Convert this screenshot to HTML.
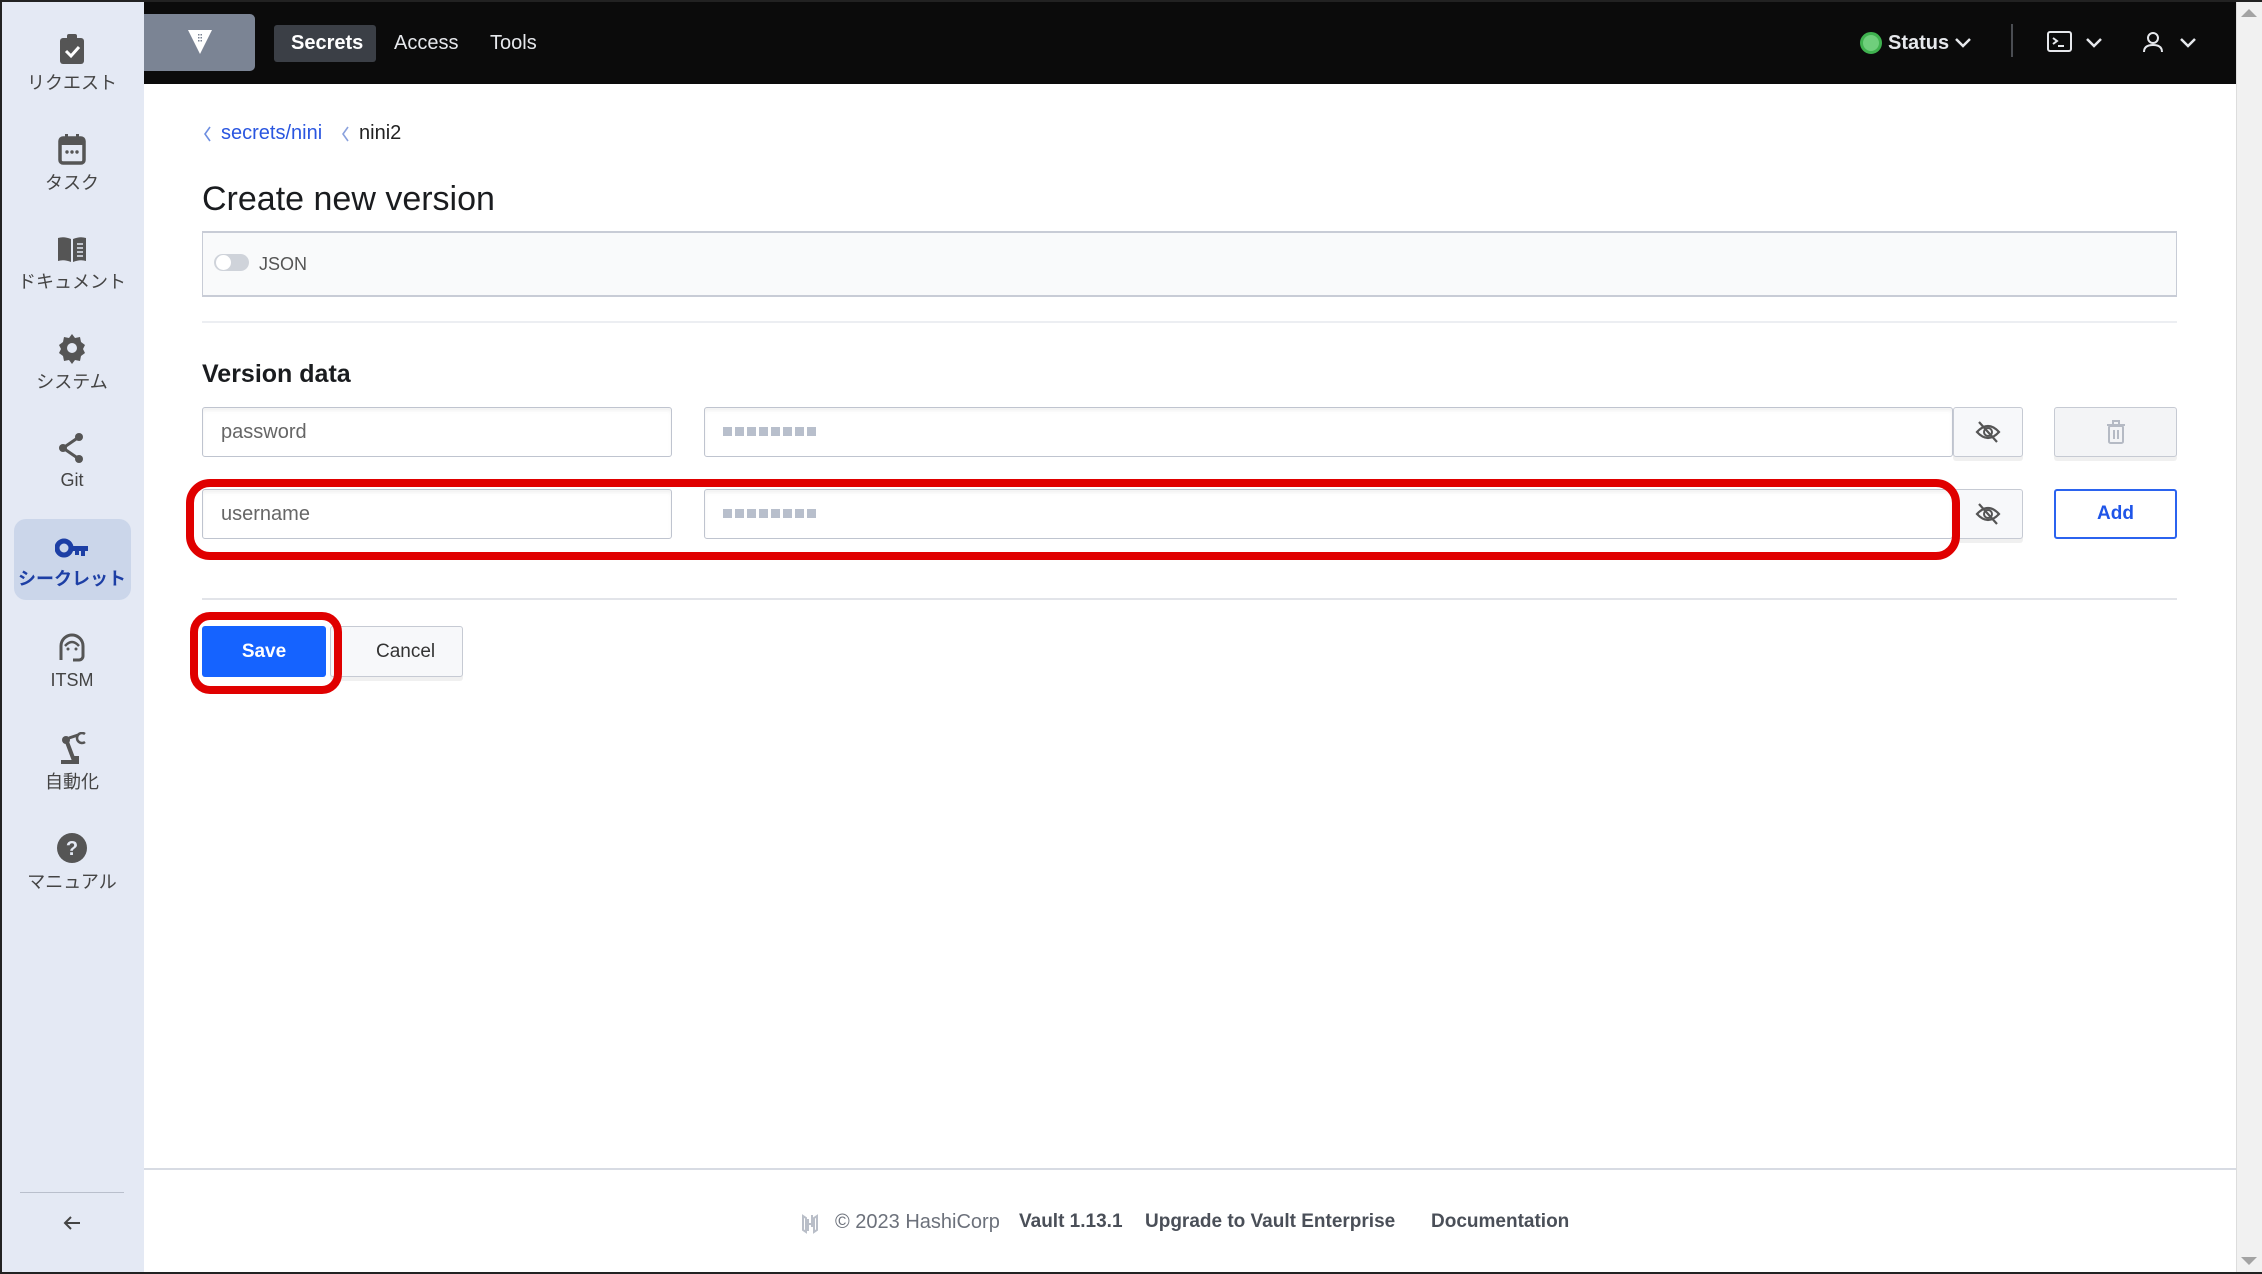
<!DOCTYPE html>
<html><head><meta charset="utf-8"><style>
*{box-sizing:border-box;margin:0;padding:0}
body{width:2262px;height:1274px;position:relative;overflow:hidden;background:#fff;font-family:"Liberation Sans","Noto Sans CJK JP",sans-serif;color:#1f2124}
.a{position:absolute}
.frame{left:0;top:0;width:2262px;height:1274px;border:2px solid #222;border-right:none;pointer-events:none;z-index:50}
.side{left:0;top:0;width:144px;height:1274px;background:#e4e9f4}
.si{position:absolute;left:0;width:144px;text-align:center;color:#444;font-size:18px}
.si svg{display:block;margin:0 auto}
.nav{left:144px;top:0;width:2092px;height:84px;background:#0b0b0b}
.inp{background:#fff;border:1px solid #bfc4cf;border-radius:3px;box-shadow:inset 0 3px 3px rgba(0,0,0,.05)}
.btn{background:#f7f8fa;border:1px solid #c6cad3;border-radius:3px;box-shadow:0 4px 0 rgba(0,0,0,.06)}
.dots{position:absolute;left:18px;top:19px;display:flex;gap:3px}
.dots i{width:9px;height:9px;background:#b8bfcc;display:block}
</style></head><body>
<div class="a side"></div>
<div class="si" style="top:33px"><svg width="30" height="32" viewBox="0 0 30 32"><rect x="3" y="5" width="24" height="26" rx="3" fill="#555"/><rect x="10" y="1" width="10" height="7" rx="2" fill="#555"/><path d="M9 18l5 5 8-9" stroke="#fff" stroke-width="3" fill="none"/></svg><div style="margin-top:4px">リクエスト</div></div>
<div class="si" style="top:133px"><svg width="30" height="32" viewBox="0 0 30 32"><rect x="3" y="5" width="24" height="25" rx="3" fill="none" stroke="#555" stroke-width="3.5"/><rect x="3" y="5" width="24" height="7" fill="#555"/><rect x="8" y="1" width="3" height="6" fill="#555"/><rect x="19" y="1" width="3" height="6" fill="#555"/><circle cx="10" cy="19" r="1.7" fill="#555"/><circle cx="15" cy="19" r="1.7" fill="#555"/><circle cx="20" cy="19" r="1.7" fill="#555"/></svg><div style="margin-top:4px">タスク</div></div>
<div class="si" style="top:234px"><svg width="36" height="30" viewBox="0 0 36 30"><path d="M4 4q6-2 13 1v23q-7-3-13-1z M19 5q7-3 13-1v23q-6-2-13 1z" fill="#555"/><path d="M23 10h6M23 14h6M23 18h6M23 22h6" stroke="#e4e9f4" stroke-width="1.5"/></svg><div style="margin-top:4px">ドキュメント</div></div>
<div class="si" style="top:332px"><svg width="32" height="32" viewBox="0 0 32 32"><path d="M16 2l3 4 5-1 1 5 4 3-2 4 2 4-4 3-1 5-5-1-3 4-3-4-5 1-1-5-4-3 2-4-2-4 4-3 1-5 5 1z" fill="#555"/><circle cx="16" cy="16" r="5" fill="#e4e9f4"/></svg><div style="margin-top:4px">システム</div></div>
<div class="si" style="top:432px"><svg width="30" height="32" viewBox="0 0 30 32"><circle cx="22" cy="5" r="4" fill="#555"/><circle cx="6" cy="16" r="4" fill="#555"/><circle cx="22" cy="27" r="4" fill="#555"/><path d="M22 5L6 16l16 11" stroke="#555" stroke-width="3" fill="none"/></svg><div style="margin-top:6px">Git</div></div>
<div class="a" style="left:14px;top:519px;width:117px;height:81px;background:#cbd6ea;border-radius:12px"></div>
<div class="si" style="top:537px;color:#1d3fa5;font-weight:bold"><svg width="34" height="22" viewBox="0 0 34 22"><circle cx="9" cy="11" r="7" fill="none" stroke="#1d3fa5" stroke-width="5"/><path d="M15 9h18v5h-3v5h-4v-5h-2v4h-4v-4h-5z" fill="#1d3fa5"/></svg><div style="margin-top:6px">シークレット</div></div>
<div class="si" style="top:632px"><svg width="30" height="32" viewBox="0 0 30 32"><path d="M4 28V14a11 11 0 0122 0v10a4 4 0 01-4 4h-6" stroke="#555" stroke-width="3" fill="none"/><path d="M8 14q7-8 14 0" stroke="#555" stroke-width="2.5" fill="none"/><circle cx="11" cy="17" r="1.5" fill="#555"/><circle cx="19" cy="17" r="1.5" fill="#555"/></svg><div style="margin-top:6px">ITSM</div></div>
<div class="si" style="top:732px"><svg width="30" height="32" viewBox="0 0 30 32"><path d="M4 30h16v-4h-4L10 10" stroke="#555" stroke-width="4" fill="none"/><circle cx="9" cy="8" r="4" fill="#555"/><path d="M12 6l9-3" stroke="#555" stroke-width="3"/><path d="M28 2a5 5 0 100 8" stroke="#555" stroke-width="2.5" fill="none"/></svg><div style="margin-top:4px">自動化</div></div>
<div class="si" style="top:832px"><svg width="32" height="32" viewBox="0 0 32 32"><circle cx="16" cy="16" r="15" fill="#555"/><text x="16" y="23" text-anchor="middle" fill="#e4e9f4" font-size="20" font-weight="bold" font-family="Liberation Sans">?</text></svg><div style="margin-top:4px">マニュアル</div></div>
<div class="a" style="left:20px;top:1192px;width:104px;height:1px;background:#b9bfcc"></div>
<svg class="a" style="left:62px;top:1215px" width="20" height="16"><path d="M18 8H3M9 2L3 8l6 6" stroke="#444" stroke-width="2" fill="none"/></svg>

<div class="a nav"></div>
<div class="a" style="left:144px;top:14px;width:111px;height:57px;background:#7b8494;border-radius:0 5px 5px 0"></div>
<svg class="a" style="left:186px;top:28px" width="28" height="28" viewBox="0 0 28 28"><path d="M2 2h24L14 26z" fill="#fff"/><g fill="#7b8494"><rect x="12" y="6" width="1.5" height="1.5"/><rect x="14.5" y="6" width="1.5" height="1.5"/><rect x="12" y="9" width="1.5" height="1.5"/><rect x="14.5" y="9" width="1.5" height="1.5"/><rect x="12" y="12" width="1.5" height="1.5"/><rect x="14.5" y="12" width="1.5" height="1.5"/></g></svg>
<div class="a" style="left:274px;top:25px;width:102px;height:37px;background:#3b3f46;border-radius:3px"></div>
<div class="a" style="left:291px;top:32px;font-size:20px;color:#fff;font-weight:bold">Secrets</div>
<div class="a" style="left:394px;top:32px;font-size:20px;color:#e6e8ec">Access</div>
<div class="a" style="left:490px;top:32px;font-size:20px;color:#e6e8ec">Tools</div>
<div class="a" style="left:1860px;top:32px;width:22px;height:22px;border-radius:50%;background:#6fcf7c;border:3px solid #3fb24f"></div>
<div class="a" style="left:1888px;top:32px;font-size:20px;color:#e6e8ec;font-weight:bold">Status</div>
<svg class="a" style="left:1954px;top:37px" width="18" height="12"><path d="M2 2l7 7 7-7" stroke="#e6e8ec" stroke-width="2.5" fill="none"/></svg>
<div class="a" style="left:2011px;top:24px;width:2px;height:33px;background:#4a4d52"></div>
<svg class="a" style="left:2047px;top:31px" width="26" height="22"><rect x="1" y="1" width="23" height="19" rx="2" fill="none" stroke="#e6e8ec" stroke-width="2"/><path d="M6 7l4 3-4 3M11 15h6" stroke="#e6e8ec" stroke-width="2" fill="none"/></svg>
<svg class="a" style="left:2085px;top:37px" width="18" height="12"><path d="M2 2l7 7 7-7" stroke="#e6e8ec" stroke-width="2.5" fill="none"/></svg>
<svg class="a" style="left:2142px;top:31px" width="22" height="22"><circle cx="11" cy="7" r="5" fill="none" stroke="#e6e8ec" stroke-width="2"/><path d="M2 21q0-7 9-7t9 7" fill="none" stroke="#e6e8ec" stroke-width="2"/></svg>
<svg class="a" style="left:2179px;top:37px" width="18" height="12"><path d="M2 2l7 7 7-7" stroke="#e6e8ec" stroke-width="2.5" fill="none"/></svg>

<div class="a" style="left:2236px;top:0;width:26px;height:1274px;background:#f1f1f1;border-left:1px solid #ddd"></div>
<svg class="a" style="left:2241px;top:8px" width="16" height="10"><path d="M0 9L8 1l8 8z" fill="#a3a3a3"/></svg>
<svg class="a" style="left:2241px;top:1256px" width="16" height="10"><path d="M0 1l8 8 8-8z" fill="#a3a3a3"/></svg>

<svg class="a" style="left:202px;top:125px" width="10" height="18"><path d="M8 2L3 9l5 7" stroke="#6d8ee0" stroke-width="1.6" fill="none"/></svg>
<div class="a" style="left:221px;top:122px;font-size:20px;color:#2a56e0">secrets/nini</div>
<svg class="a" style="left:340px;top:125px" width="10" height="18"><path d="M8 2L3 9l5 7" stroke="#8aa1dd" stroke-width="1.6" fill="none"/></svg>
<div class="a" style="left:359px;top:122px;font-size:20px;color:#222">nini2</div>
<div class="a" style="left:202px;top:180px;font-size:34px;color:#1a1c1f">Create new version</div>

<div class="a" style="left:202px;top:231px;width:1975px;height:66px;background:#f9fafb;border:1px solid #c8ccd6;border-width:2px 1px 2px 1px"></div>
<div class="a" style="left:214px;top:254px;width:35px;height:17px;border-radius:9px;background:#cfd3da"></div>
<div class="a" style="left:216px;top:255px;width:15px;height:15px;border-radius:50%;background:#fff"></div>
<div class="a" style="left:259px;top:254px;font-size:18px;color:#555">JSON</div>
<div class="a" style="left:202px;top:321px;width:1975px;height:2px;background:#eceef2"></div>

<div class="a" style="left:202px;top:360px;font-size:25px;color:#1a1c1f;font-weight:bold">Version data</div>

<div class="a inp" style="left:202px;top:407px;width:470px;height:50px"><div class="a" style="left:18px;top:13px;font-size:20px;color:#666">password</div></div>
<div class="a inp" style="left:704px;top:407px;width:1249px;height:50px"><div class="dots"><i></i><i></i><i></i><i></i><i></i><i></i><i></i><i></i></div></div>
<div class="a btn" style="left:1953px;top:407px;width:70px;height:50px"></div>
<svg class="a" style="left:1975px;top:420px" width="26" height="24"><path d="M2 12q11-12 22 0q-11 12-22 0z" fill="none" stroke="#555" stroke-width="2.2"/><circle cx="13" cy="12" r="4" fill="none" stroke="#555" stroke-width="2"/><path d="M4 2l18 20" stroke="#555" stroke-width="2.2"/></svg>
<div class="a btn" style="left:2054px;top:407px;width:123px;height:50px;background:#f3f4f6"></div>
<svg class="a" style="left:2105px;top:419px" width="22" height="26"><path d="M2 6h18M8 6V2h6v4" stroke="#b5bac4" stroke-width="2" fill="none"/><rect x="4" y="7" width="14" height="17" rx="1.5" fill="none" stroke="#b5bac4" stroke-width="2"/><path d="M9 11v9M13 11v9" stroke="#b5bac4" stroke-width="2"/></svg>

<div class="a inp" style="left:202px;top:489px;width:470px;height:50px"><div class="a" style="left:18px;top:13px;font-size:20px;color:#666">username</div></div>
<div class="a inp" style="left:704px;top:489px;width:1249px;height:50px"><div class="dots"><i></i><i></i><i></i><i></i><i></i><i></i><i></i><i></i></div></div>
<div class="a btn" style="left:1953px;top:489px;width:70px;height:50px"></div>
<svg class="a" style="left:1975px;top:502px" width="26" height="24"><path d="M2 12q11-12 22 0q-11 12-22 0z" fill="none" stroke="#555" stroke-width="2.2"/><circle cx="13" cy="12" r="4" fill="none" stroke="#555" stroke-width="2"/><path d="M4 2l18 20" stroke="#555" stroke-width="2.2"/></svg>
<div class="a" style="left:2054px;top:489px;width:123px;height:50px;border:2px solid #2b63ef;border-radius:3px;background:#fff;text-align:center;line-height:46px;font-size:19px;font-weight:bold;color:#1f55e8">Add</div>
<div class="a" style="left:186px;top:479px;width:1774px;height:81px;border:8px solid #e00000;border-radius:24px"></div>

<div class="a" style="left:202px;top:598px;width:1975px;height:2px;background:#e2e4e9"></div>

<div class="a btn" style="left:330px;top:626px;width:133px;height:51px"></div>
<div class="a" style="left:376px;top:641px;font-size:19px;color:#333">Cancel</div>
<div class="a" style="left:202px;top:626px;width:124px;height:51px;background:#1563ff;border-radius:3px;text-align:center;line-height:51px;color:#fff;font-size:19px;font-weight:bold">Save</div>
<div class="a" style="left:190px;top:612px;width:152px;height:82px;border:8px solid #e00000;border-radius:20px"></div>

<div class="a" style="left:144px;top:1168px;width:2092px;height:2px;background:#d7dbe3"></div>
<svg class="a" style="left:800px;top:1211px" width="20" height="24"><path d="M3 5v14l3 2V7zM17 5v14l-3 2V7zM8 8v12M12 4v12M8 13h4" stroke="#b9bec8" stroke-width="2" fill="none"/></svg>
<div class="a" style="left:835px;top:1211px;font-size:20px;color:#6c717b">© 2023 HashiCorp</div>
<div class="a" style="left:1019px;top:1211px;font-size:19px;color:#4a4f58;font-weight:bold">Vault 1.13.1</div>
<div class="a" style="left:1145px;top:1211px;font-size:19px;color:#4a4f58;font-weight:bold">Upgrade to Vault Enterprise</div>
<div class="a" style="left:1431px;top:1211px;font-size:19px;color:#4a4f58;font-weight:bold">Documentation</div>
<div class="a frame"></div>
</body></html>
